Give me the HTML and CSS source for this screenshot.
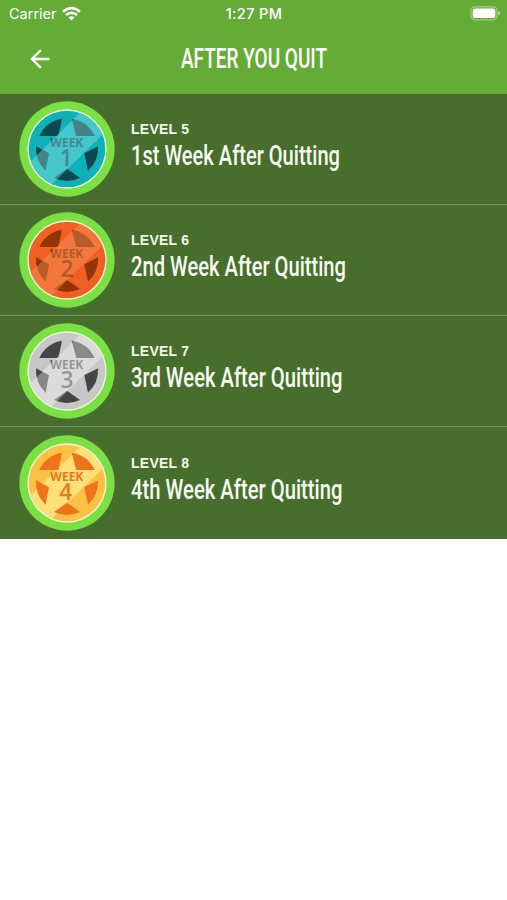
FILE: index.html
```
<!DOCTYPE html>
<html lang="en">
<head>
<meta charset="utf-8">
<title>After You Quit</title>
<link rel="stylesheet" href="styles.css">
</head>
<body>
<svg class="defs" aria-hidden="true">
  <defs>
    <clipPath id="disc"><circle r="115"/></clipPath>
    <g id="holes">
      <path d="M-83-39H-26L-15-91A92 92 0 0 0-83-39Z"/>
      <path d="M83-39H28L14-91A92 92 0 0 1 83-39Z"/>
      <path d="M93-8 52 13 63 65A92 92 0 0 0 93-8Z"/>
      <path d="M-93-8-54 13-64 65A92 92 0 0 1-93-8Z"/>
      <path d="M0 59-39 87A96 96 0 0 0 39 87Z"/>
    </g>
    <path id="shine" d="M60-130-130 58-70 130 130-66Z" clip-path="url(#disc)"/>
  </defs>
</svg>
<header class="header">
  <div class="status">
    <div class="carrier">
      <span>Carrier</span>
      <svg class="wifi" viewBox="0 0 19 14"><path d="M1 4.800Q9.500-2.500 18 4.800M4 8Q9.500 3.500 15 8" fill="none" stroke="#fff" stroke-width="2.500"/><path d="M6.400 10.400Q9.500 8 12.600 10.400L9.500 13.600Z" fill="#fff"/></svg>
    </div>
    <span class="time">1:27 PM</span>
    <svg class="battery" viewBox="0 0 31 15"><rect x="1" y=".8" width="26" height="13" rx="4" fill="none" stroke="#fff" stroke-opacity=".4" stroke-width="1.200"/><rect x="2.700" y="2.500" width="22.600" height="9.600" rx="2.200" fill="#fff"/><path d="M28.300 5V9.600Q30.200 8.800 30.200 7.300T28.300 5Z" fill="#fff" fill-opacity=".5"/></svg>
  </div>
  <div class="nav">
    <svg class="back" viewBox="0 0 20 20"><path d="M19.500 10H2M10.800 1.200 2 10l8.800 8.800" fill="none" stroke="#fff" stroke-width="2.400"/></svg>
    <svg class="title" viewBox="0 0 146 32"><text x="0" y="25" textLength="146" lengthAdjust="spacingAndGlyphs">AFTER YOU QUIT</text></svg>
  </div>
</header>
<main class="list">
  <section class="row">
    <svg class="badge week1" viewBox="-144 -144 288 288"><circle class="ring" r="143"/><circle class="rim" r="119"/><circle class="face" r="115"/><use href="#holes" class="holes"/><text class="word" x="-50" y="-6" textLength="99" lengthAdjust="spacingAndGlyphs">WEEK</text><text class="number" x="-2" y="51">1</text><use href="#shine" class="shine"/></svg>
    <div class="info"><div class="level">LEVEL 5</div><svg class="name" viewBox="0 0 220 34"><text x="0" y="25.500" textLength="209" lengthAdjust="spacingAndGlyphs">1st Week After Quitting</text></svg></div>
  </section>
  <section class="row">
    <svg class="badge week2" viewBox="-144 -144 288 288"><circle class="ring" r="143"/><circle class="rim" r="119"/><circle class="face" r="115"/><use href="#holes" class="holes"/><text class="word" x="-50" y="-6" textLength="99" lengthAdjust="spacingAndGlyphs">WEEK</text><text class="number" x="0" y="51">2</text><use href="#shine" class="shine"/></svg>
    <div class="info"><div class="level">LEVEL 6</div><svg class="name" viewBox="0 0 220 34"><text x="0" y="25.500" textLength="215" lengthAdjust="spacingAndGlyphs">2nd Week After Quitting</text></svg></div>
  </section>
  <section class="row">
    <svg class="badge week3" viewBox="-144 -144 288 288"><circle class="ring" r="143"/><circle class="rim" r="119"/><circle class="face" r="115"/><use href="#holes" class="holes"/><text class="word" x="-50" y="-6" textLength="99" lengthAdjust="spacingAndGlyphs">WEEK</text><text class="number" x="0" y="51">3</text><use href="#shine" class="shine"/></svg>
    <div class="info"><div class="level">LEVEL 7</div><svg class="name" viewBox="0 0 220 34"><text x="0" y="25.500" textLength="211.500" lengthAdjust="spacingAndGlyphs">3rd Week After Quitting</text></svg></div>
  </section>
  <section class="row">
    <svg class="badge week4" viewBox="-144 -144 288 288"><circle class="ring" r="143"/><circle class="rim" r="119"/><circle class="face" r="115"/><use href="#shine" class="shine"/><use href="#holes" class="holes"/><text class="word" x="-50" y="-6" textLength="99" lengthAdjust="spacingAndGlyphs">WEEK</text><text class="number" x="-4" y="51">4</text></svg>
    <div class="info"><div class="level">LEVEL 8</div><svg class="name" viewBox="0 0 220 34"><text x="0" y="25.500" textLength="211.500" lengthAdjust="spacingAndGlyphs">4th Week After Quitting</text></svg></div>
  </section>
</main>
</body>
</html>
```
FILE: styles.css
```
* { box-sizing: border-box; }
body { margin: 0; background: #fff; color: #fff; font-family: "Liberation Sans", sans-serif; }
svg { display: block; flex: none; overflow: visible; }
.defs { width: 0; height: 0; }
.header { height: 94px; background: #64ac35; }
.status {
  display: grid;
  grid-template-columns: 1fr auto 1fr;
  align-items: center;
  height: 27px;
  padding: 0 6px 0 9px;
  font: 400 14.500px/27px Inter, sans-serif;
}
.carrier { display: flex; align-items: center; gap: 5px; }
.wifi { width: 19px; height: 14px; }
.time { font-weight: 500; font-size: 14.500px; letter-spacing: .35px; margin-left: -2px; }
.battery { width: 31px; height: 15px; justify-self: end; }
.nav { display: grid; grid-template-columns: 181px 146px; align-items: center; height: 64px; }
.back { width: 20px; height: 20px; margin-left: 30px; }
.title { width: 146px; height: 32px; margin-top: -1px; }
.title text { font: 500 27.500px Roboto, sans-serif; fill: #fff; }
.row {
  display: flex;
  gap: 16px;
  height: 111px;
  padding: 7px 0 0 19px;
  background: #486e2d;
  border-bottom: 1px solid #759861;
}
.row:last-child { height: 112px; padding-top: 8px; border-bottom: 0; }
.badge { width: 96px; height: 96px; }
.info { padding-top: 20px; }
.level { font-size: 14px; font-weight: 700; line-height: 16px; letter-spacing: .25px; color: #f1f8ec; }
.name { width: 220px; height: 34px; margin-top: 2px; }
.name text { font: 500 27px Roboto, sans-serif; fill: #f5faf0; }
.ring { fill: #7ae044; }
.rim { fill: #f1f5d8; }
.face { fill: var(--face); }
.holes { fill: var(--hole); }
.shine { fill: var(--light); fill-opacity: .37; }
.word { font: 700 38px "Open Sans", sans-serif; fill: var(--ink); }
.number { font: 600 68px "Open Sans", sans-serif; fill: var(--ink); text-anchor: middle; }
.week1 { --face: #0eb1b8; --hole: #10464f; --ink: #104f59; --light: #a0ebeb; }
.week2 { --face: #f16023; --hole: #923407; --ink: #8a3208; --light: #f8a068; }
.week3 { --face: #c7c7c7; --hole: #454545; --ink: #5a5a5a; --light: #ffffff; }
.week4 { --face: #ffc145; --hole: #ed741b; --ink: #e67a1c; --light: #fff8a0; }
.week4 .shine { fill-opacity: .55; }
```
